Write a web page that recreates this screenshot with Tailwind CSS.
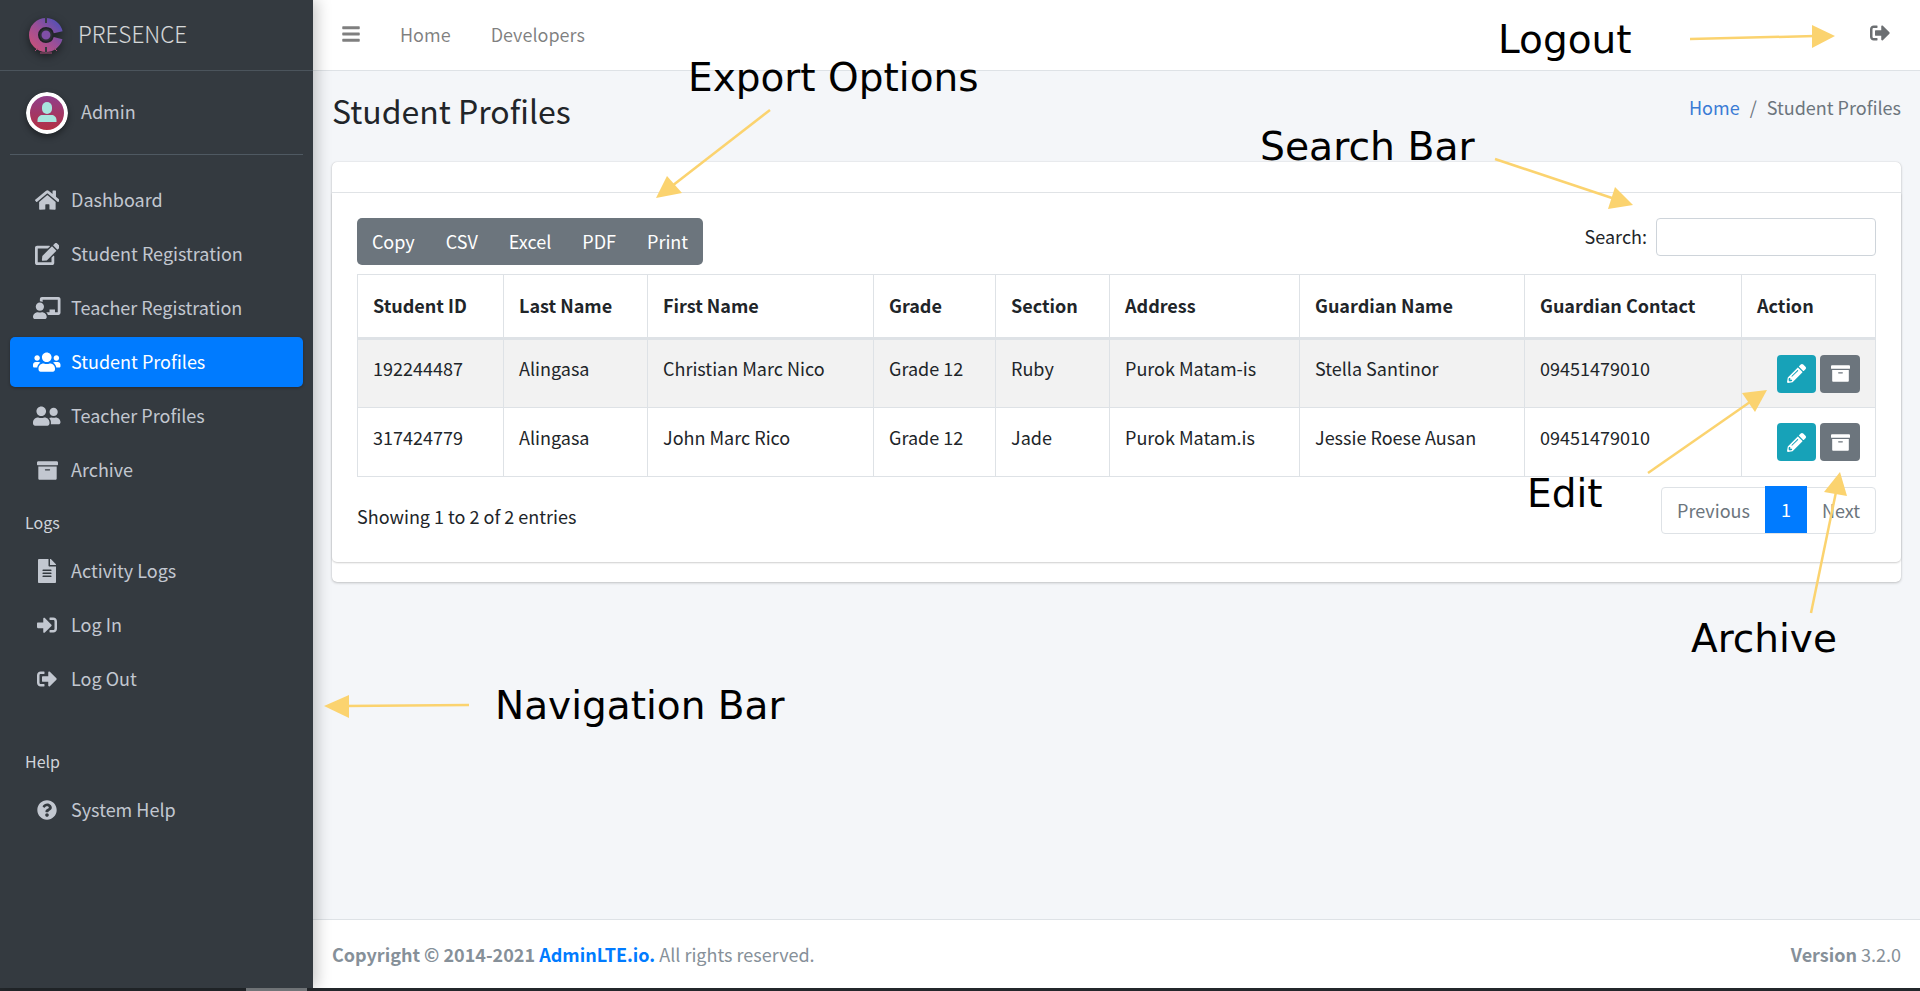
<!DOCTYPE html>
<html lang="en">
<head>
    <meta charset="UTF-8">
    <meta name="viewport" content="width=device-width, initial-scale=1.0">
    <script src="https://cdn.jsdelivr.net/npm/@tailwindcss/browser@4"></script>
    <title>Student Profiles</title>
</head>
<body class="bg-[#f4f6f9] font-['Noto_Sans_CJK_JP','Liberation_Sans',sans-serif] text-[18px] leading-[30px] text-[#212529] overflow-hidden">
<div class="relative w-[1920px] h-[991px] flex flex-col overflow-hidden">
    <div class="flex h-[988px]">
        <!-- Sidebar -->
        <aside class="w-[313px] shrink-0 bg-[#343a40] text-[#c2c7d0] z-10 shadow-[4px_0_14px_rgba(0,0,0,0.22)]">
            <div class="h-[71px] border-b border-[#4b545c] flex items-center pl-[27px]">
                <svg class="w-[38px] h-[38px] mr-[13px] drop-shadow-[0_3px_4px_rgba(0,0,0,0.5)]" viewBox="0 0 38 38">
                    <defs>
                        <linearGradient id="logoGrad" x1="0" y1="1" x2="1" y2="0">
                            <stop offset="0" stop-color="#c4517c"/>
                            <stop offset="0.5" stop-color="#9a4f98"/>
                            <stop offset="1" stop-color="#5650b4"/>
                        </linearGradient>
                    </defs>
                    <circle cx="19" cy="19" r="12.500" fill="none" stroke="url(#logoGrad)" stroke-width="9" stroke-dasharray="72 6.500" stroke-dashoffset="-3.250"/>
                    <circle cx="19" cy="19" r="5.500" fill="#7f4fa6" stroke="#2c2f36" stroke-width="2"/>
                    <path d="M19 1v6M19 31v6" stroke="#343a40" stroke-width="2"/>
                    <path d="M8 35l3-3M30 35l-3-3M13 37h12" fill="none" stroke="#a84f78" stroke-width="1"/>
                </svg>
                <span class="font-light text-[22.500px] text-white/80 leading-none mb-[3px]">PRESENCE</span>
            </div>
            <div class="mx-[10px] h-[84px] border-b border-[#4f5962] flex items-center pl-[16px]">
                <svg class="w-[42px] h-[42px] mr-[13px] rounded-full shadow-[0_3px_6px_rgba(0,0,0,0.4)]" viewBox="0 0 42 42">
                    <defs>
                        <linearGradient id="avatarGrad" x1="0" y1="0" x2="0" y2="1">
                            <stop offset="0" stop-color="#8f3f8f"/>
                            <stop offset="1" stop-color="#b5303f"/>
                        </linearGradient>
                    </defs>
                    <circle cx="21" cy="21" r="19" fill="url(#avatarGrad)" stroke="#fff" stroke-width="4"/>
                    <rect x="16" y="10" width="10" height="12" rx="5" fill="#a8e6de"/>
                    <path d="M11.500 30v-2c0-3 2.500-5 5-5h9c2.500 0 5 2 5 5v2z" fill="#a8e6de"/>
                </svg>
                <span class="mb-[4px]">Admin</span>
            </div>
            <nav class="pt-[20px] px-[10px]">
                <a class="h-[50px] mb-[4px] flex items-center">
                    <span class="w-[61px] pl-[13px] flex justify-center"><svg class="h-[22px] fill-current" viewBox="0 0 576 512"><path d="M280.37 148.26L96 300.11V464a16 16 0 0 0 16 16l112.06-.29a16 16 0 0 0 15.92-16V368a16 16 0 0 1 16-16h64a16 16 0 0 1 16 16v95.64a16 16 0 0 0 16 16.05L464 480a16 16 0 0 0 16-16V300L295.67 148.26a12.19 12.19 0 0 0-15.3 0zM571.6 251.47L488 182.56V44.05a12 12 0 0 0-12-12h-56a12 12 0 0 0-12 12v72.61L318.47 43a48 48 0 0 0-61 0L4.34 251.47a12 12 0 0 0-1.6 16.9l25.5 31A12 12 0 0 0 45.15 301l235.22-193.74a12.19 12.19 0 0 1 15.3 0L530.9 301a12 12 0 0 0 16.9-1.6l25.5-31a12 12 0 0 0-1.7-16.93z"/></svg></span>
                    <span class="pb-[2px]">Dashboard</span>
                </a>
                <a class="h-[50px] mb-[4px] flex items-center">
                    <span class="w-[61px] pl-[13px] flex justify-center"><svg class="h-[22px] fill-current" viewBox="0 0 576 512"><path d="M402.6 83.2l90.2 90.2c3.8 3.8 3.8 10 0 13.8L274.4 405.6l-92.8 10.3c-12.4 1.4-22.9-9.1-21.5-21.5l10.3-92.8L388.8 83.2c3.8-3.8 10-3.8 13.8 0zm162-22.9l-48.8-48.8c-15.2-15.2-39.9-15.2-55.2 0l-35.4 35.4c-3.8 3.8-3.8 10 0 13.8l90.2 90.2c3.8 3.8 10 3.8 13.8 0l35.4-35.4c15.2-15.3 15.2-40 0-55.2zM384 346.2V448H64V128h229.8c3.2 0 6.2-1.3 8.5-3.5l40-40c7.6-7.6 2.2-20.5-8.5-20.5H48C21.5 64 0 85.5 0 112v352c0 26.5 21.5 48 48 48h352c26.5 0 48-21.5 48-48V306.2c0-10.7-12.9-16-20.5-8.5l-40 40c-2.2 2.3-3.5 5.3-3.5 8.5z"/></svg></span>
                    <span class="pb-[2px]">Student Registration</span>
                </a>
                <a class="h-[50px] mb-[4px] flex items-center">
                    <span class="w-[61px] pl-[13px] flex justify-center"><svg class="h-[22px] fill-current" viewBox="0 0 640 512"><path d="M208 352c-2.39 0-4.78.35-7.06 1.09C187.98 357.3 174.35 360 160 360c-14.35 0-27.98-2.7-40.95-6.91-2.28-.74-4.66-1.09-7.05-1.09C49.94 352-.33 402.48 0 464.62.14 490.88 21.73 512 48 512h224c26.27 0 47.86-21.12 48-47.38.33-62.14-49.94-112.62-112-112.62zm-48-32c53.02 0 96-42.98 96-96s-42.98-96-96-96-96 42.98-96 96 42.98 96 96 96zM592 0H208c-26.47 0-48 22.25-48 49.59V96c23.42 0 45.1 6.78 64 17.8V64h352v288h-64v-64H384v64h-76.24c19.1 16.69 33.12 38.73 39.69 64H592c26.47 0 48-22.25 48-49.59V49.59C640 22.25 618.47 0 592 0z"/></svg></span>
                    <span class="pb-[2px]">Teacher Registration</span>
                </a>
                <a class="h-[50px] mb-[4px] flex items-center bg-[#007bff] text-white rounded-[5px] shadow-[0_1px_3px_rgba(0,0,0,0.3)]">
                    <span class="w-[61px] pl-[13px] flex justify-center"><svg class="h-[22px] fill-current" viewBox="0 0 640 512"><path d="M96 224c35.3 0 64-28.7 64-64s-28.7-64-64-64-64 28.7-64 64 28.7 64 64 64zm448 0c35.3 0 64-28.7 64-64s-28.7-64-64-64-64 28.7-64 64 28.7 64 64 64zm32 32h-64c-17.6 0-33.5 7.1-45.1 18.6 40.3 22.1 68.9 62 75.1 109.4h66c17.7 0 32-14.3 32-32v-32c0-35.3-28.7-64-64-64zm-256 0c61.9 0 112-50.1 112-112S381.9 32 320 32 208 82.1 208 144s50.1 112 112 112zm76.8 32h-8.3c-20.8 10-43.9 16-68.5 16s-47.6-6-68.5-16h-8.3C179.6 288 128 339.6 128 403.2V432c0 26.5 21.5 48 48 48h288c26.5 0 48-21.5 48-48v-28.8c0-63.6-51.6-115.2-115.2-115.2zm-223.7-13.4C161.5 263.1 145.6 256 128 256H64c-35.3 0-64 28.7-64 64v32c0 17.7 14.3 32 32 32h65.9c6.3-47.4 34.9-87.3 75.2-109.4z"/></svg></span>
                    <span class="pb-[2px]">Student Profiles</span>
                </a>
                <a class="h-[50px] mb-[4px] flex items-center">
                    <span class="w-[61px] pl-[13px] flex justify-center"><svg class="h-[22px] fill-current" viewBox="0 0 640 512"><path d="M192 256c61.9 0 112-50.1 112-112S253.9 32 192 32 80 82.1 80 144s50.1 112 112 112zm76.8 32h-8.3c-20.8 10-43.9 16-68.5 16s-47.6-6-68.5-16h-8.3C51.6 288 0 339.6 0 403.2V432c0 26.5 21.5 48 48 48h288c26.5 0 48-21.5 48-48v-28.8c0-63.6-51.6-115.2-115.2-115.2zM480 256c53 0 96-43 96-96s-43-96-96-96-96 43-96 96 43 96 96 96zm48 32h-3.8c-13.9 4.8-28.6 8-44.2 8s-30.3-3.2-44.2-8H432c-20.4 0-39.2 5.9-55.7 15.4 24.4 26.3 39.7 61.2 39.7 99.8v38.4c0 2.2-.5 4.3-.6 6.4H592c26.5 0 48-21.5 48-48 0-61.9-50.1-112-112-112z"/></svg></span>
                    <span class="pb-[2px]">Teacher Profiles</span>
                </a>
                <a class="h-[50px] mb-[4px] flex items-center">
                    <span class="w-[61px] pl-[13px] flex justify-center"><svg class="h-[21px] fill-current" viewBox="0 0 512 512"><path d="M32 448c0 17.7 14.3 32 32 32h384c17.7 0 32-14.3 32-32V160H32v288zm160-212c0-6.6 5.4-12 12-12h104c6.6 0 12 5.4 12 12v8c0 6.6-5.4 12-12 12H204c-6.6 0-12-5.4-12-12v-8zM480 32H32C14.3 32 0 46.3 0 64v48c0 8.8 7.2 16 16 16h480c8.8 0 16-7.2 16-16V64c0-17.7-14.3-32-32-32z"/></svg></span>
                    <span class="pb-[2px]">Archive</span>
                </a>
                <div class="py-[10px] px-[15px] text-[16px] leading-[27px] text-[#d0d4db]">Logs</div>
                <a class="h-[50px] mb-[4px] flex items-center">
                    <span class="w-[61px] pl-[13px] flex justify-center"><svg class="h-[24px] fill-current" viewBox="0 0 384 512"><path d="M224 136V0H24C10.7 0 0 10.7 0 24v464c0 13.3 10.7 24 24 24h336c13.3 0 24-10.7 24-24V160H248c-13.2 0-24-10.8-24-24zm64 236c0 6.6-5.4 12-12 12H108c-6.6 0-12-5.4-12-12v-8c0-6.6 5.4-12 12-12h168c6.6 0 12 5.4 12 12v8zm0-64c0 6.6-5.4 12-12 12H108c-6.6 0-12-5.4-12-12v-8c0-6.6 5.4-12 12-12h168c6.6 0 12 5.4 12 12v8zm0-72v8c0 6.6-5.4 12-12 12H108c-6.6 0-12-5.4-12-12v-8c0-6.6 5.4-12 12-12h168c6.6 0 12 5.4 12 12zm96-114.1v6.1H256V0h6.1c6.4 0 12.5 2.5 17 7l97.9 98c4.5 4.5 7 10.6 7 16.9z"/></svg></span>
                    <span class="pb-[2px]">Activity Logs</span>
                </a>
                <a class="h-[50px] mb-[4px] flex items-center">
                    <span class="w-[61px] pl-[13px] flex justify-center"><svg class="h-[20px] fill-current" viewBox="0 0 512 512"><path d="M416 448h-84c-6.6 0-12-5.4-12-12v-40c0-6.6 5.4-12 12-12h84c17.7 0 32-14.3 32-32V160c0-17.7-14.3-32-32-32h-84c-6.6 0-12-5.4-12-12V76c0-6.6 5.4-12 12-12h84c53 0 96 43 96 96v192c0 53-43 96-96 96zm-47-201L201 79c-15-15-41-4.5-41 17v96H24c-13.3 0-24 10.7-24 24v96c0 13.3 10.7 24 24 24h136v96c0 21.5 26 32 41 17l168-168c9.3-9.4 9.3-24.6 0-34z"/></svg></span>
                    <span class="pb-[2px]">Log In</span>
                </a>
                <a class="h-[50px] mb-[34px] flex items-center">
                    <span class="w-[61px] pl-[13px] flex justify-center"><svg class="h-[20px] fill-current" viewBox="0 0 512 512"><path d="M497 273L329 441c-15 15-41 4.5-41-17v-96H152c-13.3 0-24-10.7-24-24v-96c0-13.3 10.7-24 24-24h136V88c0-21.4 25.9-32 41-17l168 168c9.3 9.4 9.3 24.6 0 34zM192 436v-40c0-6.6-5.4-12-12-12H96c-17.7 0-32-14.3-32-32V160c0-17.7 14.3-32 32-32h84c6.6 0 12-5.4 12-12V76c0-6.6-5.4-12-12-12H96c-53 0-96 43-96 96v192c0 53 43 96 96 96h84c6.6 0 12-5.4 12-12z"/></svg></span>
                    <span class="pb-[2px]">Log Out</span>
                </a>
                <div class="py-[10px] px-[15px] text-[16px] leading-[27px] text-[#d0d4db]">Help</div>
                <a class="h-[50px] mb-[4px] flex items-center">
                    <span class="w-[61px] pl-[13px] flex justify-center"><svg class="h-[20px] fill-current" viewBox="0 0 512 512"><path d="M504 256c0 136.997-111.043 248-248 248S8 392.997 8 256C8 119.083 119.043 8 256 8s248 111.083 248 248zM262.655 90c-54.497 0-89.255 22.957-116.549 63.758-3.536 5.286-2.353 12.415 2.715 16.258l34.699 26.31c5.205 3.947 12.621 3.008 16.665-2.122 17.864-22.658 30.113-35.797 57.303-35.797 20.429 0 45.698 13.148 45.698 32.958 0 14.976-12.363 22.667-32.534 33.976C247.128 238.528 216 254.941 216 296v4c0 6.627 5.373 12 12 12h56c6.627 0 12-5.373 12-12v-1.333c0-28.462 83.186-29.647 83.186-106.667 0-58.002-60.165-102-116.531-102zM256 338c-25.365 0-46 20.635-46 46 0 25.364 20.635 46 46 46s46-20.636 46-46c0-25.365-20.635-46-46-46z"/></svg></span>
                    <span class="pb-[2px]">System Help</span>
                </a>
            </nav>
        </aside>

        <div class="flex-1 flex flex-col min-w-0">
            <!-- Top bar -->
            <header class="h-[71px] shrink-0 bg-white border-b border-[#dee2e6] flex items-center text-black/50">
                <svg class="w-[18px] h-[20px] ml-[29px] mb-[2px] fill-current" viewBox="0 0 448 512"><path d="M16 132h416c8.837 0 16-7.163 16-16V76c0-8.837-7.163-16-16-16H16C7.163 60 0 67.163 0 76v40c0 8.837 7.163 16 16 16zm0 160h416c8.837 0 16-7.163 16-16v-40c0-8.837-7.163-16-16-16H16c-8.837 0-16 7.163-16 16v40c0 8.837 7.163 16 16 16zm0 160h416c8.837 0 16-7.163 16-16v-40c0-8.837-7.163-16-16-16H16c-8.837 0-16 7.163-16 16v40c0 8.837 7.163 16 16 16z"/></svg>
                <a class="ml-[40px] pb-[2px]">Home</a>
                <a class="ml-[40px] pb-[2px]">Developers</a>
                <svg class="w-[20px] h-[20px] ml-auto mr-[30px] mb-[4px] fill-current text-[#6c6f72]" viewBox="0 0 512 512"><path d="M497 273L329 441c-15 15-41 4.5-41-17v-96H152c-13.3 0-24-10.7-24-24v-96c0-13.3 10.7-24 24-24h136V88c0-21.4 25.9-32 41-17l168 168c9.3 9.4 9.3 24.6 0 34zM192 436v-40c0-6.6-5.4-12-12-12H96c-17.7 0-32-14.3-32-32V160c0-17.7 14.3-32 32-32h84c6.6 0 12-5.4 12-12V76c0-6.6-5.4-12-12-12H96c-53 0-96 43-96 96v192c0 53 43 96 96 96h84c6.6 0 12-5.4 12-12z"/></svg>
            </header>

            <!-- Content -->
            <main class="flex-1 px-[19px] min-h-0">
                <div class="h-[91px] flex items-start justify-between">
                    <h1 class="text-[32px] leading-[43px] mt-[18px]">Student Profiles</h1>
                    <div class="mt-[21px] flex text-[#6c757d]">
                        <a class="text-[#3a7bd5]">Home</a>
                        <span class="px-[10px]">/</span>
                        <span>Student Profiles</span>
                    </div>
                </div>
                <section class="bg-white rounded-[5px] shadow-[0_0_1px_rgba(0,0,0,0.2),0_1px_3px_rgba(0,0,0,0.2)] pb-[20px]">
                    <div class="h-[31px] border-b border-[#e2e5e8]"></div>
                    <div class="rounded-b-[5px] shadow-[0_1px_2px_rgba(0,0,0,0.2)] px-[25px] pt-[25px] h-[369px]">
                        <div class="flex justify-between items-start">
                            <div class="h-[47px] w-[346px] pb-[2px] flex justify-center bg-[#6c757d] text-white rounded-[5px] items-center">
                                <span class="px-[15.500px]">Copy</span>
                                <span class="px-[15.500px]">CSV</span>
                                <span class="px-[15.500px]">Excel</span>
                                <span class="px-[15.500px]">PDF</span>
                                <span class="px-[15.500px]">Print</span>
                            </div>
                            <label class="flex items-center">
                                <span class="mr-[9px] pb-[2px]">Search:</span>
                                <input type="text" class="w-[220px] h-[38px] border border-[#ced4da] rounded-[4px] bg-white">
                            </label>
                        </div>
                        <table class="mt-[9px] w-[1518px] table-fixed border-collapse">
                            <colgroup>
                                <col class="w-[146px]"><col class="w-[144px]"><col class="w-[226px]"><col class="w-[122px]"><col class="w-[114px]"><col class="w-[190px]"><col class="w-[225px]"><col class="w-[217px]"><col class="w-[134px]">
                            </colgroup>
                            <thead>
                                <tr class="h-[64px] font-bold text-left">
                                    <th class="border border-b-[3px] border-[#dee2e6] pl-[15px] pb-[2px]">Student ID</th>
                                    <th class="border border-b-[3px] border-[#dee2e6] pl-[15px] pb-[2px]">Last Name</th>
                                    <th class="border border-b-[3px] border-[#dee2e6] pl-[15px] pb-[2px]">First Name</th>
                                    <th class="border border-b-[3px] border-[#dee2e6] pl-[15px] pb-[2px]">Grade</th>
                                    <th class="border border-b-[3px] border-[#dee2e6] pl-[15px] pb-[2px]">Section</th>
                                    <th class="border border-b-[3px] border-[#dee2e6] pl-[15px] pb-[2px]">Address</th>
                                    <th class="border border-b-[3px] border-[#dee2e6] pl-[15px] pb-[2px]">Guardian Name</th>
                                    <th class="border border-b-[3px] border-[#dee2e6] pl-[15px] pb-[2px]">Guardian Contact</th>
                                    <th class="border border-b-[3px] border-[#dee2e6] pl-[15px] pb-[2px]">Action</th>
                                </tr>
                            </thead>
                            <tbody>
                                <tr class="h-[69px] bg-[#f2f2f2]">
                                    <td class="border border-[#dee2e6] pl-[15px] pb-[12px]">192244487</td>
                                    <td class="border border-[#dee2e6] pl-[15px] pb-[12px]">Alingasa</td>
                                    <td class="border border-[#dee2e6] pl-[15px] pb-[12px]">Christian Marc Nico</td>
                                    <td class="border border-[#dee2e6] pl-[15px] pb-[12px]">Grade 12</td>
                                    <td class="border border-[#dee2e6] pl-[15px] pb-[12px]">Ruby</td>
                                    <td class="border border-[#dee2e6] pl-[15px] pb-[12px]">Purok Matam-is</td>
                                    <td class="border border-[#dee2e6] pl-[15px] pb-[12px]">Stella Santinor</td>
                                    <td class="border border-[#dee2e6] pl-[15px] pb-[12px]">09451479010</td>
                                    <td class="border border-[#dee2e6] pr-[15px]">
                                        <div class="flex justify-end gap-[4px]">
                                            <button class="w-[39px] h-[38px] bg-[#17a2b8] rounded-[4px] flex items-center justify-center text-white"><svg class="w-[19px] h-[19px] fill-current" viewBox="0 0 512 512"><path d="M497.9 142.1l-46.1 46.1c-4.7 4.7-12.3 4.7-17 0l-111-111c-4.7-4.7-4.7-12.3 0-17l46.1-46.1c18.7-18.7 49.1-18.7 67.9 0l60.1 60.1c18.8 18.7 18.8 49.1 0 67.9zM284.2 99.8L21.6 362.4.4 483.9c-2.9 16.4 11.4 30.6 27.8 27.8l121.5-21.3 262.6-262.6c4.7-4.7 4.7-12.3 0-17l-111-111c-4.8-4.7-12.4-4.7-17.1 0zM124.1 339.9c-5.5-5.5-5.5-14.3 0-19.8l154-154c5.5-5.5 14.3-5.5 19.8 0s5.5 14.3 0 19.8l-154 154c-5.5 5.5-14.3 5.5-19.8 0zM88 424h48v36.3l-64.5 11.3-31.1-31.1L51.7 376H88v48z"/></svg></button>
                                            <button class="w-[40px] h-[38px] bg-[#6c757d] rounded-[4px] flex items-center justify-center text-white"><svg class="w-[19px] h-[19px] fill-current" viewBox="0 0 512 512"><path d="M32 448c0 17.7 14.3 32 32 32h384c17.7 0 32-14.3 32-32V160H32v288zm160-212c0-6.6 5.4-12 12-12h104c6.6 0 12 5.4 12 12v8c0 6.6-5.4 12-12 12H204c-6.6 0-12-5.4-12-12v-8zM480 32H32C14.3 32 0 46.3 0 64v48c0 8.8 7.2 16 16 16h480c8.8 0 16-7.2 16-16V64c0-17.7-14.3-32-32-32z"/></svg></button>
                                        </div>
                                    </td>
                                </tr>
                                <tr class="h-[69px]">
                                    <td class="border border-[#dee2e6] pl-[15px] pb-[10px]">317424779</td>
                                    <td class="border border-[#dee2e6] pl-[15px] pb-[10px]">Alingasa</td>
                                    <td class="border border-[#dee2e6] pl-[15px] pb-[10px]">John Marc Rico</td>
                                    <td class="border border-[#dee2e6] pl-[15px] pb-[10px]">Grade 12</td>
                                    <td class="border border-[#dee2e6] pl-[15px] pb-[10px]">Jade</td>
                                    <td class="border border-[#dee2e6] pl-[15px] pb-[10px]">Purok Matam.is</td>
                                    <td class="border border-[#dee2e6] pl-[15px] pb-[10px]">Jessie Roese Ausan</td>
                                    <td class="border border-[#dee2e6] pl-[15px] pb-[10px]">09451479010</td>
                                    <td class="border border-[#dee2e6] pr-[15px]">
                                        <div class="flex justify-end gap-[4px]">
                                            <button class="w-[39px] h-[38px] bg-[#17a2b8] rounded-[4px] flex items-center justify-center text-white"><svg class="w-[19px] h-[19px] fill-current" viewBox="0 0 512 512"><path d="M497.9 142.1l-46.1 46.1c-4.7 4.7-12.3 4.7-17 0l-111-111c-4.7-4.7-4.7-12.3 0-17l46.1-46.1c18.7-18.7 49.1-18.7 67.9 0l60.1 60.1c18.8 18.7 18.8 49.1 0 67.9zM284.2 99.8L21.6 362.4.4 483.9c-2.9 16.4 11.4 30.6 27.8 27.8l121.5-21.3 262.6-262.6c4.7-4.7 4.7-12.3 0-17l-111-111c-4.8-4.7-12.4-4.7-17.1 0zM124.1 339.9c-5.5-5.5-5.5-14.3 0-19.8l154-154c5.5-5.5 14.3-5.5 19.8 0s5.5 14.3 0 19.8l-154 154c-5.5 5.5-14.3 5.5-19.8 0zM88 424h48v36.3l-64.5 11.3-31.1-31.1L51.7 376H88v48z"/></svg></button>
                                            <button class="w-[40px] h-[38px] bg-[#6c757d] rounded-[4px] flex items-center justify-center text-white"><svg class="w-[19px] h-[19px] fill-current" viewBox="0 0 512 512"><path d="M32 448c0 17.7 14.3 32 32 32h384c17.7 0 32-14.3 32-32V160H32v288zm160-212c0-6.6 5.4-12 12-12h104c6.6 0 12 5.4 12 12v8c0 6.6-5.4 12-12 12H204c-6.6 0-12-5.4-12-12v-8zM480 32H32C14.3 32 0 46.3 0 64v48c0 8.8 7.2 16 16 16h480c8.8 0 16-7.2 16-16V64c0-17.7-14.3-32-32-32z"/></svg></button>
                                        </div>
                                    </td>
                                </tr>
                            </tbody>
                        </table>
                        <div class="mt-[10px] flex justify-between items-start">
                            <div class="pt-[14px]">Showing 1 to 2 of 2 entries</div>
                            <div class="h-[47px] pb-[2px] flex items-center border border-[#dee2e6] rounded-[4px] text-[#6c757d] bg-white">
                                <span class="w-[103px] text-center">Previous</span>
                                <span class="w-[42px] h-[47px] pb-[2px] bg-[#007bff] text-white flex items-center justify-center">1</span>
                                <span class="w-[68px] text-center">Next</span>
                            </div>
                        </div>
                    </div>
                </section>
            </main>

            <!-- Footer -->
            <footer class="h-[69px] shrink-0 bg-white border-t border-[#dee2e6] px-[19px] flex items-center justify-between text-[#869099]">
                <div><b>Copyright © 2014-2021 <a class="text-[#007bff]">AdminLTE.io.</a></b> All rights reserved.</div>
                <div><b>Version</b> 3.2.0</div>
            </footer>
        </div>
    </div>
    <div class="h-[3px] flex bg-[#23272b]"><div class="w-[246px]"></div><div class="w-[61px] bg-[#7b7f83]"></div></div>

    <!-- Annotations drawn on the screenshot -->
    <svg class="absolute inset-0 z-20 w-[1920px] h-[991px] pointer-events-none" viewBox="0 0 1920 991" fill="#fbd36f" stroke="#fbd36f">
        <path d="M1690 39L1815 36" stroke-width="2.500"/><path d="M1812 25L1835 36L1812 48z" stroke="none"/>
        <path d="M1495 159L1615 199" stroke-width="2.500"/><path d="M1615 187L1633 205L1608 209z" stroke="none"/>
        <path d="M770 110L672 186" stroke-width="2.500"/><path d="M667 176L656 198L682 193z" stroke="none"/>
        <path d="M1648 473L1750 402" stroke-width="2.500"/><path d="M1742 393L1767 390L1755 412z" stroke="none"/>
        <path d="M1811 613L1836 492" stroke-width="2.500"/><path d="M1824 492L1840 472L1847 496z" stroke="none"/>
        <path d="M469 705L345 706" stroke-width="2.500"/><path d="M349 695L324 706L349 718z" stroke="none"/>
    </svg>
    <div class="absolute z-20 left-[1498px] top-[16px] font-['DejaVu_Sans'] text-[39px] leading-[48px] text-black">Logout</div>
    <div class="absolute z-20 left-[688px] top-[54px] font-['DejaVu_Sans'] text-[39px] leading-[48px] text-black">Export Options</div>
    <div class="absolute z-20 left-[1260px] top-[123px] font-['DejaVu_Sans'] text-[39.300px] leading-[48px] text-black">Search Bar</div>
    <div class="absolute z-20 left-[1527px] top-[470px] font-['DejaVu_Sans'] text-[39px] leading-[48px] text-black">Edit</div>
    <div class="absolute z-20 left-[1691px] top-[615px] font-['DejaVu_Sans'] text-[39px] leading-[48px] text-black">Archive</div>
    <div class="absolute z-20 left-[495px] top-[682px] font-['DejaVu_Sans'] text-[39px] leading-[48px] text-black">Navigation Bar</div>
</div>
</body>
</html>
